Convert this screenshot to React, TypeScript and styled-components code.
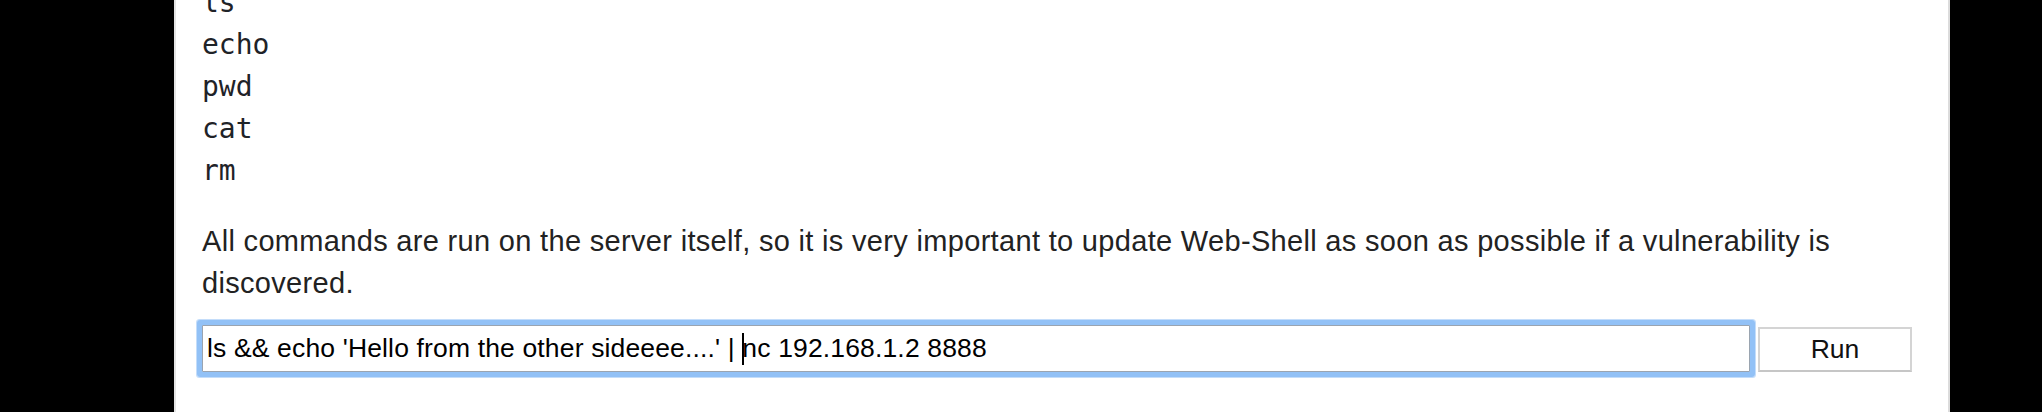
import React from "react";
import styled, { createGlobalStyle } from "styled-components";

const GlobalStyle = createGlobalStyle`
  html, body {
    margin: 0;
    padding: 0;
    background: #000;
    overflow: hidden;
  }
  body {
    width: 2042px;
    height: 412px;
  }
`;

const Panel = styled.main`
  box-sizing: border-box;
  display: flow-root;
  margin-left: 174px;
  width: 1776px;
  height: 412px;
  background: #fff;
  border-left: 2px solid #e4e4e4;
  border-right: 2px solid #dcdcdc;
  padding: 0 36px 0 26px;
  color: #222;
`;

const CommandList = styled.div`
  margin-top: -18px;
  font-family: "DejaVu Sans Mono", "Liberation Mono", monospace;
  font-size: 28px;
  line-height: 42px;
  color: #1f2328;
`;

const Command = styled.div`
  white-space: pre;
`;

const Note = styled.p`
  margin: 28px 0 0;
  font-family: "Liberation Sans", Arial, sans-serif;
  font-size: 29px;
  letter-spacing: 0.32px;
  line-height: 42px;
  color: #222;
`;

const Form = styled.form`
  display: flex;
  align-items: flex-end;
  gap: 8px;
  margin-top: 21px;
`;

const Field = styled.div`
  box-sizing: border-box;
  flex: 1;
  height: 47px;
  border: 1px solid #9aa4b0;
  border-radius: 1px;
  padding: 0 4px;
  display: flex;
  align-items: center;
  font-family: "Liberation Sans", Arial, sans-serif;
  font-size: 26.5px;
  letter-spacing: 0.15px;
  color: #000;
  white-space: pre;
  background: #fff;
  box-shadow: 0 0 0 5px #92c1f6, 0 0 0 6px #c4ddfa;
`;

const Caret = styled.span`
  display: inline-block;
  width: 2px;
  height: 32px;
  background: #000;
  vertical-align: middle;
  margin-right: -2px;
`;

const RunButton = styled.button`
  box-sizing: border-box;
  width: 154px;
  height: 45px;
  background: #fff;
  border: 2px solid #d4d4d4;
  border-bottom-color: #c6c6c6;
  border-radius: 0;
  font-family: "Liberation Sans", Arial, sans-serif;
  font-size: 26.5px;
  color: #111;
  padding: 0;
`;

const commands = ["ls", "echo", "pwd", "cat", "rm"];

export default function App() {
  return (
    <>
      <GlobalStyle />
      <Panel>
        <CommandList>
          {commands.map((c) => (
            <Command key={c}>{c}</Command>
          ))}
        </CommandList>
        <Note>
          All commands are run on the server itself, so it is very important to update Web-Shell as soon as
          possible if a vulnerability is discovered.
        </Note>
        <Form onSubmit={(e) => e.preventDefault()}>
          <Field role="textbox">
            {"ls && echo 'Hello from the other sideeee....' | "}
            <Caret />
            {"nc 192.168.1.2 8888"}
          </Field>
          <RunButton type="submit">Run</RunButton>
        </Form>
      </Panel>
    </>
  );
}
